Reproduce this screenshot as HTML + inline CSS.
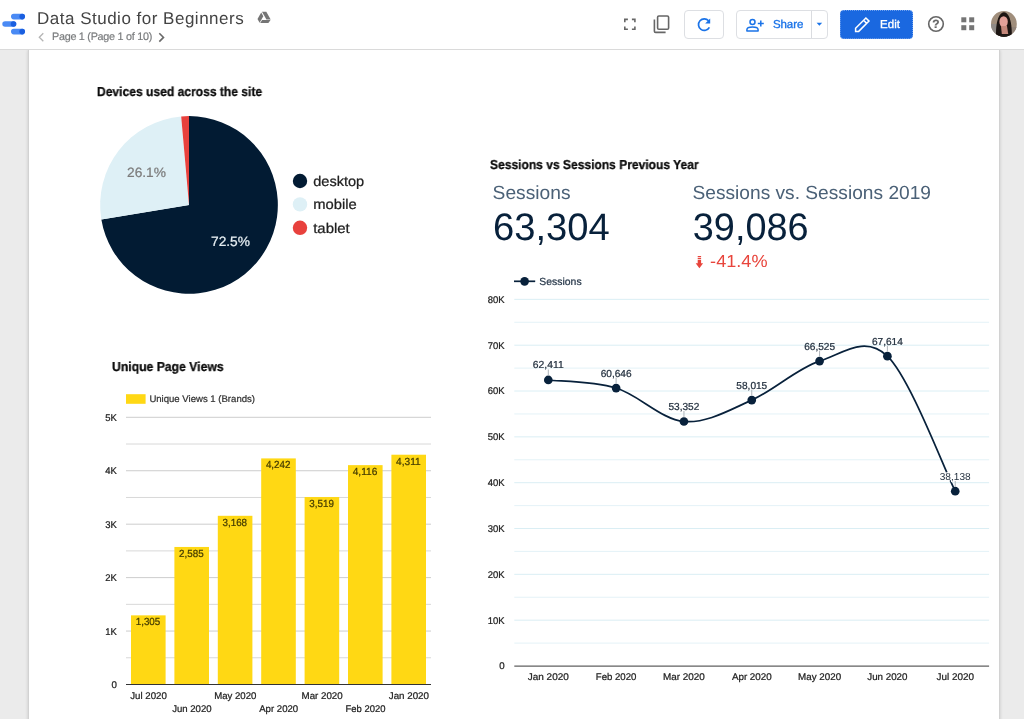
<!DOCTYPE html>
<html lang="en">
<head>
<meta charset="utf-8">
<title>Data Studio for Beginners</title>
<style>
html,body{margin:0;padding:0}
body{text-rendering:geometricPrecision;width:1024px;height:719px;overflow:hidden;background:#ebebeb;font-family:"Liberation Sans",Arial,sans-serif;position:relative}
#hdr{z-index:2;position:absolute;left:0;top:0;width:1024px;height:49px;background:#fff;border-bottom:1px solid #dadada}
#hdr .title{position:absolute;left:36.6px;top:8.6px;font-size:17px;line-height:20px;color:#444;white-space:nowrap;letter-spacing:0.5px}
#hdr .sub{position:absolute;left:51.5px;top:30.1px;font-size:10.8px;line-height:14px;color:#7a7c7e;-webkit-text-stroke:0.2px #7a7c7e;white-space:nowrap;letter-spacing:-0.27px}
.btn{position:absolute;top:10px;height:27px;border:1px solid #dddfe3;border-radius:4px;background:#fff;box-sizing:content-box}
.btn.primary{background:#1a68e0;border:1px dotted #6fa0ee;color:#fff}
.lbl{position:absolute;font-size:12px;font-weight:bold;line-height:16px;white-space:nowrap}
#page{position:absolute;left:28px;top:50px;width:970px;height:680px;background:#fff;border-left:1px solid #d2d2d2;border-right:1px solid #d2d2d2;box-shadow:0 0 3px rgba(0,0,0,.16)}
svg{position:absolute;left:0;top:0;overflow:visible;will-change:transform}
#hdr .title,#hdr .sub,.lbl,.h{will-change:transform}
svg text{text-rendering:geometricPrecision;font-family:"Liberation Sans",Arial,sans-serif}
.h{margin:0;position:absolute;font-weight:bold;color:#0c0c0c;-webkit-text-stroke:0.3px #0c0c0c;white-space:nowrap;font-size:13px;line-height:14px;transform-origin:0 0}
</style>
</head>
<body>

<div id="hdr">
<div class="title">Data Studio for Beginners</div>
<div class="sub">Page 1 (Page 1 of 10)</div>
<div class="btn" style="left:684px;width:38px"></div>
<div class="btn" style="left:736px;width:90px"><div style="position:absolute;left:74.3px;top:0;width:1px;height:27px;background:#dadce0"></div><span class="lbl" style="left:36.3px;top:6.3px;color:#1a73e8;font-size:11.5px;font-weight:normal;-webkit-text-stroke:0.35px #1a73e8;letter-spacing:-0.1px">Share</span></div>
<div class="btn primary" style="left:840px;width:71.3px"><span class="lbl" style="left:38.5px;top:6.3px;color:#fff;font-size:11.5px;font-weight:normal;-webkit-text-stroke:0.35px #fff;letter-spacing:0.05px">Edit</span></div>
<svg width="1024" height="50" viewBox="0 0 1024 50">
<g>
<rect x="11" y="13.8" width="14" height="5.6" rx="2.8" fill="#4a8af4"/>
<circle cx="22.2" cy="16.6" r="2.8" fill="#1a5fe0"/>
<rect x="2.3" y="21.2" width="14" height="5.6" rx="2.8" fill="#4a8af4"/>
<circle cx="13.5" cy="24.0" r="2.8" fill="#1a5fe0"/>
<rect x="11" y="28.8" width="14" height="5.6" rx="2.8" fill="#4a8af4"/>
<circle cx="22.2" cy="31.6" r="2.8" fill="#1a5fe0"/>
</g>
<path d="M43.3 33.2 L39.3 37.2 L43.3 41.2" fill="none" stroke="#b4b4b4" stroke-width="1.3"/>
<path d="M159.3 33.2 L163.5 37.4 L159.3 41.6" fill="none" stroke="#6a6a6a" stroke-width="1.6"/>
<g fill="#757575"><path d="M262.0 11.8 L266.3 11.8 L270.7 19.4 L266.4 19.4 Z"/><path d="M261.2 12.6 L263.3 16.3 L259.6 22.8 L257.5 19.1 Z"/><path d="M262.1 19.9 L270.5 19.9 L268.4 23.0 L260.2 23.0 Z"/></g>
<path d="M624.8 22.3 V19.4 H627.9 M631.9 19.4 H634.9 V22.3 M634.9 26.4 V29.3 H631.9 M627.9 29.3 H624.8 V26.4" fill="none" stroke="#666" stroke-width="1.6"/>
<rect x="657.6" y="16" width="11" height="13.2" rx="1.3" fill="none" stroke="#666" stroke-width="1.6"/>
<path d="M654.4 19.6 V31.2 A1.2 1.2 0 0 0 655.6 32.4 H665.6" fill="none" stroke="#666" stroke-width="1.6"/>
<path d="M708.6 20.7 A5.8 5.8 0 1 0 709.4 27.4" fill="none" stroke="#1a73e8" stroke-width="1.7"/>
<path d="M710.2 18.6 V23.6 H705.2 Z" fill="#1a73e8"/>
<circle cx="752.5" cy="22" r="2.5" fill="none" stroke="#1a73e8" stroke-width="1.5"/>
<path d="M746.9 31 V29.7 C746.9 27.8 750.2 27 752.5 27 C754.8 27 758.1 27.8 758.1 29.7 V31 Z" fill="none" stroke="#1a73e8" stroke-width="1.5" stroke-linejoin="round"/>
<path d="M760.8 20.6 V26.6 M757.8 23.6 H763.8" stroke="#1a73e8" stroke-width="1.5" fill="none"/>
<path d="M816.6 22.7 H822.2 L819.4 25.8 Z" fill="#1a73e8"/>
<path d="M855.6 31.4 V28.3 L865.9 18 L869 21.1 L858.7 31.4 Z M863.6 20.3 L866.7 23.4" fill="none" stroke="#fff" stroke-width="1.5" stroke-linejoin="miter"/>
<circle cx="936" cy="24" r="7.3" fill="none" stroke="#666" stroke-width="1.6"/>
<text x="936" y="28.3" font-size="12" fill="#666" text-anchor="middle" font-weight="bold" stroke="#666" stroke-width="0.24">?</text>
<rect x="961.3" y="17.3" width="5" height="5" fill="#757575"/>
<rect x="961.3" y="25.2" width="5" height="5" fill="#757575"/>
<rect x="969.2" y="17.3" width="5" height="5" fill="#757575"/>
<rect x="969.2" y="25.2" width="5" height="5" fill="#757575"/>
<defs><clipPath id="av"><circle cx="1003.9" cy="23.9" r="12.9"/></clipPath></defs>
<g clip-path="url(#av)"><rect x="990" y="10" width="28" height="28" fill="#a08e7c"/><rect x="990" y="24" width="9" height="14" fill="#8f8a86"/><rect x="1010" y="27" width="9" height="11" fill="#93857a"/><path d="M996.2 37 C995.5 30 996.5 13 1004 12.2 C1011.5 13 1012 30 1011.8 37 Z" fill="#1c1512"/><ellipse cx="1003.6" cy="21.8" rx="4.2" ry="5.6" fill="#e3a199"/><path d="M1001 26 H1007 L1008.2 34 H1001.8 Z" fill="#c4877a"/><path d="M995 38 C997 33.5 1011 33.5 1013 38 Z" fill="#231b18"/></g>
</svg>
</div>
<div id="page">
<svg width="1024" height="719" viewBox="0 0 1024 719" style="left:-29px;top:-50px">
<path d="M189.0 204.95 L189.00 116.10 A88.85 88.85 0 1 1 101.35 219.51 Z" fill="#021b33"/>
<path d="M189.0 204.95 L101.35 219.51 A88.85 88.85 0 0 1 181.19 116.44 Z" fill="#def0f6"/>
<path d="M189.0 204.95 L181.19 116.44 A88.85 88.85 0 0 1 189.00 116.10 Z" fill="#e8413d"/>
<text x="127" y="177.3" font-size="13.5" fill="#7c7c7c" text-anchor="start" font-weight="normal" textLength="39" lengthAdjust="spacingAndGlyphs" stroke="#7c7c7c" stroke-width="0.24">26.1%</text>
<text x="211" y="246.3" font-size="13.5" fill="#e6eef2" text-anchor="start" font-weight="normal" textLength="39" lengthAdjust="spacingAndGlyphs" stroke="#e6eef2" stroke-width="0.24">72.5%</text>
<circle cx="300" cy="181.0" r="7.2" fill="#021b33"/>
<text x="313.2" y="185.8" font-size="14" fill="#212121" text-anchor="start" font-weight="normal" textLength="51" lengthAdjust="spacingAndGlyphs" stroke="#212121" stroke-width="0.24">desktop</text>
<circle cx="300" cy="204.4" r="7.2" fill="#def0f6"/>
<text x="313.2" y="209.2" font-size="14" fill="#212121" text-anchor="start" font-weight="normal" textLength="43.5" lengthAdjust="spacingAndGlyphs" stroke="#212121" stroke-width="0.24">mobile</text>
<circle cx="300" cy="227.8" r="7.2" fill="#e8413d"/>
<text x="313.2" y="232.6" font-size="14" fill="#212121" text-anchor="start" font-weight="normal" textLength="36.5" lengthAdjust="spacingAndGlyphs" stroke="#212121" stroke-width="0.24">tablet</text>
<text x="492.6" y="198.5" font-size="19" fill="#4b6177" text-anchor="start" font-weight="normal" textLength="78" lengthAdjust="spacingAndGlyphs">Sessions</text>
<text x="493.0" y="239.8" font-size="38.3" fill="#08213b" text-anchor="start" font-weight="normal" textLength="116.8" lengthAdjust="spacingAndGlyphs">63,304</text>
<text x="692.5" y="198.5" font-size="19" fill="#4b6177" text-anchor="start" font-weight="normal" textLength="238.5" lengthAdjust="spacingAndGlyphs">Sessions vs. Sessions 2019</text>
<text x="692.8" y="239.8" font-size="38.3" fill="#08213b" text-anchor="start" font-weight="normal" textLength="115.8" lengthAdjust="spacingAndGlyphs">39,086</text>
<path d="M697.7 256.1 H701.1 V257.3 H697.7 Z M697.7 258 H701.1 V259.2 H697.7 Z M697.7 259.9 H701.1 V263.3 H703.1 L699.4 268.2 L695.7 263.3 H697.7 Z" fill="#e8453c"/>
<text x="710.1" y="267.4" font-size="17.6" fill="#e8453c" text-anchor="start" font-weight="normal" textLength="57.4" lengthAdjust="spacingAndGlyphs">-41.4%</text>
<line x1="514.3" x2="989.1" y1="643.09" y2="643.09" stroke="#e1f1f6" stroke-width="0.9"/>
<line x1="514.3" x2="989.1" y1="620.17" y2="620.17" stroke="#d6ecf3" stroke-width="0.9"/>
<line x1="514.3" x2="989.1" y1="597.25" y2="597.25" stroke="#e1f1f6" stroke-width="0.9"/>
<line x1="514.3" x2="989.1" y1="574.34" y2="574.34" stroke="#d6ecf3" stroke-width="0.9"/>
<line x1="514.3" x2="989.1" y1="551.42" y2="551.42" stroke="#e1f1f6" stroke-width="0.9"/>
<line x1="514.3" x2="989.1" y1="528.51" y2="528.51" stroke="#d6ecf3" stroke-width="0.9"/>
<line x1="514.3" x2="989.1" y1="505.60" y2="505.60" stroke="#e1f1f6" stroke-width="0.9"/>
<line x1="514.3" x2="989.1" y1="482.68" y2="482.68" stroke="#d6ecf3" stroke-width="0.9"/>
<line x1="514.3" x2="989.1" y1="459.76" y2="459.76" stroke="#e1f1f6" stroke-width="0.9"/>
<line x1="514.3" x2="989.1" y1="436.85" y2="436.85" stroke="#d6ecf3" stroke-width="0.9"/>
<line x1="514.3" x2="989.1" y1="413.94" y2="413.94" stroke="#e1f1f6" stroke-width="0.9"/>
<line x1="514.3" x2="989.1" y1="391.02" y2="391.02" stroke="#d6ecf3" stroke-width="0.9"/>
<line x1="514.3" x2="989.1" y1="368.11" y2="368.11" stroke="#e1f1f6" stroke-width="0.9"/>
<line x1="514.3" x2="989.1" y1="345.19" y2="345.19" stroke="#d6ecf3" stroke-width="0.9"/>
<line x1="514.3" x2="989.1" y1="322.28" y2="322.28" stroke="#e1f1f6" stroke-width="0.9"/>
<line x1="514.3" x2="989.1" y1="299.36" y2="299.36" stroke="#d6ecf3" stroke-width="0.9"/>
<line x1="514.3" x2="989.1" y1="666.2" y2="666.2" stroke="#606060" stroke-width="1.3"/>
<text x="504.6" y="669.4" font-size="9.7" fill="#222" text-anchor="end" font-weight="normal" stroke="#222" stroke-width="0.24">0</text>
<text x="504.6" y="623.6" font-size="9.7" fill="#222" text-anchor="end" font-weight="normal" textLength="16.9" lengthAdjust="spacingAndGlyphs" stroke="#222" stroke-width="0.24">10K</text>
<text x="504.6" y="577.7" font-size="9.7" fill="#222" text-anchor="end" font-weight="normal" textLength="16.9" lengthAdjust="spacingAndGlyphs" stroke="#222" stroke-width="0.24">20K</text>
<text x="504.6" y="531.9" font-size="9.7" fill="#222" text-anchor="end" font-weight="normal" textLength="16.9" lengthAdjust="spacingAndGlyphs" stroke="#222" stroke-width="0.24">30K</text>
<text x="504.6" y="486.1" font-size="9.7" fill="#222" text-anchor="end" font-weight="normal" textLength="16.9" lengthAdjust="spacingAndGlyphs" stroke="#222" stroke-width="0.24">40K</text>
<text x="504.6" y="440.2" font-size="9.7" fill="#222" text-anchor="end" font-weight="normal" textLength="16.9" lengthAdjust="spacingAndGlyphs" stroke="#222" stroke-width="0.24">50K</text>
<text x="504.6" y="394.4" font-size="9.7" fill="#222" text-anchor="end" font-weight="normal" textLength="16.9" lengthAdjust="spacingAndGlyphs" stroke="#222" stroke-width="0.24">60K</text>
<text x="504.6" y="348.6" font-size="9.7" fill="#222" text-anchor="end" font-weight="normal" textLength="16.9" lengthAdjust="spacingAndGlyphs" stroke="#222" stroke-width="0.24">70K</text>
<text x="504.6" y="302.8" font-size="9.7" fill="#222" text-anchor="end" font-weight="normal" textLength="16.9" lengthAdjust="spacingAndGlyphs" stroke="#222" stroke-width="0.24">80K</text>
<path d="M548.30 379.97 C559.60 381.32 593.51 381.14 616.12 388.06 C638.73 394.98 661.33 419.48 683.94 421.49 C706.55 423.50 729.15 410.18 751.76 400.12 C774.37 390.06 796.97 368.45 819.58 361.12 C842.19 353.78 864.79 334.44 887.40 356.13 C910.01 377.81 943.92 468.70 955.22 491.21" fill="none" stroke="#08213b" stroke-width="1.7"/>
<circle cx="548.30" cy="379.97" r="4.35" fill="#08213b"/>
<circle cx="616.12" cy="388.06" r="4.35" fill="#08213b"/>
<circle cx="683.94" cy="421.49" r="4.35" fill="#08213b"/>
<circle cx="751.76" cy="400.12" r="4.35" fill="#08213b"/>
<circle cx="819.58" cy="361.12" r="4.35" fill="#08213b"/>
<circle cx="887.40" cy="356.13" r="4.35" fill="#08213b"/>
<circle cx="955.22" cy="491.21" r="4.35" fill="#08213b"/>
<line x1="548.30" x2="548.30" y1="369.47" y2="375.47" stroke="#aeb4ba" stroke-width="1"/>
<text x="548.3" y="368.4" font-size="10.1" fill="#1f2c3b" text-anchor="middle" font-weight="normal" textLength="30.9" lengthAdjust="spacingAndGlyphs" stroke="#1f2c3b" stroke-width="0.24">62,411</text>
<text x="548.3" y="680.4" font-size="9.7" fill="#222" text-anchor="middle" font-weight="normal" textLength="41.0" lengthAdjust="spacingAndGlyphs" stroke="#222" stroke-width="0.24">Jan 2020</text>
<line x1="616.12" x2="616.12" y1="377.56" y2="383.56" stroke="#aeb4ba" stroke-width="1"/>
<text x="616.1" y="376.5" font-size="10.1" fill="#1f2c3b" text-anchor="middle" font-weight="normal" textLength="30.9" lengthAdjust="spacingAndGlyphs" stroke="#1f2c3b" stroke-width="0.24">60,646</text>
<text x="616.1" y="680.4" font-size="9.7" fill="#222" text-anchor="middle" font-weight="normal" textLength="40.6" lengthAdjust="spacingAndGlyphs" stroke="#222" stroke-width="0.24">Feb 2020</text>
<line x1="683.94" x2="683.94" y1="410.99" y2="416.99" stroke="#aeb4ba" stroke-width="1"/>
<text x="683.9" y="409.9" font-size="10.1" fill="#1f2c3b" text-anchor="middle" font-weight="normal" textLength="30.9" lengthAdjust="spacingAndGlyphs" stroke="#1f2c3b" stroke-width="0.24">53,352</text>
<text x="683.9" y="680.4" font-size="9.7" fill="#222" text-anchor="middle" font-weight="normal" textLength="41.8" lengthAdjust="spacingAndGlyphs" stroke="#222" stroke-width="0.24">Mar 2020</text>
<line x1="751.76" x2="751.76" y1="389.62" y2="395.62" stroke="#aeb4ba" stroke-width="1"/>
<text x="751.8" y="388.5" font-size="10.1" fill="#1f2c3b" text-anchor="middle" font-weight="normal" textLength="30.9" lengthAdjust="spacingAndGlyphs" stroke="#1f2c3b" stroke-width="0.24">58,015</text>
<text x="751.8" y="680.4" font-size="9.7" fill="#222" text-anchor="middle" font-weight="normal" textLength="39.8" lengthAdjust="spacingAndGlyphs" stroke="#222" stroke-width="0.24">Apr 2020</text>
<line x1="819.58" x2="819.58" y1="350.62" y2="356.62" stroke="#aeb4ba" stroke-width="1"/>
<text x="819.6" y="349.5" font-size="10.1" fill="#1f2c3b" text-anchor="middle" font-weight="normal" textLength="30.9" lengthAdjust="spacingAndGlyphs" stroke="#1f2c3b" stroke-width="0.24">66,525</text>
<text x="819.6" y="680.4" font-size="9.7" fill="#222" text-anchor="middle" font-weight="normal" textLength="43.0" lengthAdjust="spacingAndGlyphs" stroke="#222" stroke-width="0.24">May 2020</text>
<line x1="887.40" x2="887.40" y1="345.63" y2="351.63" stroke="#aeb4ba" stroke-width="1"/>
<text x="887.4" y="344.5" font-size="10.1" fill="#1f2c3b" text-anchor="middle" font-weight="normal" textLength="30.9" lengthAdjust="spacingAndGlyphs" stroke="#1f2c3b" stroke-width="0.24">67,614</text>
<text x="887.4" y="680.4" font-size="9.7" fill="#222" text-anchor="middle" font-weight="normal" textLength="40.2" lengthAdjust="spacingAndGlyphs" stroke="#222" stroke-width="0.24">Jun 2020</text>
<line x1="955.22" x2="955.22" y1="480.71" y2="486.71" stroke="#aeb4ba" stroke-width="1"/>
<text x="955.2" y="479.6" font-size="10.1" fill="#1f2c3b" text-anchor="middle" font-weight="normal" textLength="30.9" lengthAdjust="spacingAndGlyphs" stroke="#fff" stroke-width="2" paint-order="stroke" stroke-linejoin="round">38,138</text>
<text x="955.2" y="680.4" font-size="9.7" fill="#222" text-anchor="middle" font-weight="normal" textLength="37.4" lengthAdjust="spacingAndGlyphs" stroke="#222" stroke-width="0.24">Jul 2020</text>
<line x1="514" x2="535.2" y1="281.3" y2="281.3" stroke="#08213b" stroke-width="1.7"/><circle cx="524.6" cy="281.3" r="4.35" fill="#08213b"/>
<text x="539.3" y="285.2" font-size="10.3" fill="#2a3a4c" text-anchor="start" font-weight="normal" textLength="42.3" lengthAdjust="spacingAndGlyphs" stroke="#2a3a4c" stroke-width="0.24">Sessions</text>
<line x1="126" x2="431" y1="657.78" y2="657.78" stroke="#d8d8d8" stroke-width="1"/>
<line x1="126" x2="431" y1="631.06" y2="631.06" stroke="#cdcdcd" stroke-width="1"/>
<line x1="126" x2="431" y1="604.34" y2="604.34" stroke="#d8d8d8" stroke-width="1"/>
<line x1="126" x2="431" y1="577.62" y2="577.62" stroke="#cdcdcd" stroke-width="1"/>
<line x1="126" x2="431" y1="550.90" y2="550.90" stroke="#d8d8d8" stroke-width="1"/>
<line x1="126" x2="431" y1="524.18" y2="524.18" stroke="#cdcdcd" stroke-width="1"/>
<line x1="126" x2="431" y1="497.46" y2="497.46" stroke="#d8d8d8" stroke-width="1"/>
<line x1="126" x2="431" y1="470.74" y2="470.74" stroke="#cdcdcd" stroke-width="1"/>
<line x1="126" x2="431" y1="444.02" y2="444.02" stroke="#d8d8d8" stroke-width="1"/>
<line x1="126" x2="431" y1="417.30" y2="417.30" stroke="#cdcdcd" stroke-width="1"/>
<text x="116.8" y="687.9" font-size="9.7" fill="#222" text-anchor="end" font-weight="normal" stroke="#222" stroke-width="0.24">0</text>
<text x="116.8" y="634.5" font-size="9.7" fill="#222" text-anchor="end" font-weight="normal" textLength="11.6" lengthAdjust="spacingAndGlyphs" stroke="#222" stroke-width="0.24">1K</text>
<text x="116.8" y="581.0" font-size="9.7" fill="#222" text-anchor="end" font-weight="normal" textLength="11.6" lengthAdjust="spacingAndGlyphs" stroke="#222" stroke-width="0.24">2K</text>
<text x="116.8" y="527.6" font-size="9.7" fill="#222" text-anchor="end" font-weight="normal" textLength="11.6" lengthAdjust="spacingAndGlyphs" stroke="#222" stroke-width="0.24">3K</text>
<text x="116.8" y="474.1" font-size="9.7" fill="#222" text-anchor="end" font-weight="normal" textLength="11.6" lengthAdjust="spacingAndGlyphs" stroke="#222" stroke-width="0.24">4K</text>
<text x="116.8" y="420.7" font-size="9.7" fill="#222" text-anchor="end" font-weight="normal" textLength="11.6" lengthAdjust="spacingAndGlyphs" stroke="#222" stroke-width="0.24">5K</text>
<rect x="131.00" y="615.36" width="34.6" height="68.64" fill="#ffd814"/>
<text x="148.0" y="625.2" font-size="10.3" fill="#453c00" text-anchor="middle" font-weight="normal" textLength="24.6" lengthAdjust="spacingAndGlyphs" stroke="#453c00" stroke-width="0.24">1,305</text>
<text x="148.5" y="698.9" font-size="9.7" fill="#222" text-anchor="middle" font-weight="normal" textLength="36.6" lengthAdjust="spacingAndGlyphs" stroke="#222" stroke-width="0.24">Jul 2020</text>
<rect x="174.40" y="546.96" width="34.6" height="137.04" fill="#ffd814"/>
<text x="191.4" y="556.8" font-size="10.3" fill="#453c00" text-anchor="middle" font-weight="normal" textLength="24.6" lengthAdjust="spacingAndGlyphs" stroke="#453c00" stroke-width="0.24">2,585</text>
<text x="191.9" y="712.2" font-size="9.7" fill="#222" text-anchor="middle" font-weight="normal" textLength="39.400000000000006" lengthAdjust="spacingAndGlyphs" stroke="#222" stroke-width="0.24">Jun 2020</text>
<rect x="217.80" y="515.80" width="34.6" height="168.20" fill="#ffd814"/>
<text x="234.8" y="525.6" font-size="10.3" fill="#453c00" text-anchor="middle" font-weight="normal" textLength="24.6" lengthAdjust="spacingAndGlyphs" stroke="#453c00" stroke-width="0.24">3,168</text>
<text x="235.3" y="698.9" font-size="9.7" fill="#222" text-anchor="middle" font-weight="normal" textLength="42.2" lengthAdjust="spacingAndGlyphs" stroke="#222" stroke-width="0.24">May 2020</text>
<rect x="261.20" y="458.41" width="34.6" height="225.59" fill="#ffd814"/>
<text x="278.2" y="468.2" font-size="10.3" fill="#453c00" text-anchor="middle" font-weight="normal" textLength="24.6" lengthAdjust="spacingAndGlyphs" stroke="#453c00" stroke-width="0.24">4,242</text>
<text x="278.7" y="712.2" font-size="9.7" fill="#222" text-anchor="middle" font-weight="normal" textLength="39.0" lengthAdjust="spacingAndGlyphs" stroke="#222" stroke-width="0.24">Apr 2020</text>
<rect x="304.60" y="497.04" width="34.6" height="186.96" fill="#ffd814"/>
<text x="321.6" y="506.8" font-size="10.3" fill="#453c00" text-anchor="middle" font-weight="normal" textLength="24.6" lengthAdjust="spacingAndGlyphs" stroke="#453c00" stroke-width="0.24">3,519</text>
<text x="322.1" y="698.9" font-size="9.7" fill="#222" text-anchor="middle" font-weight="normal" textLength="41.0" lengthAdjust="spacingAndGlyphs" stroke="#222" stroke-width="0.24">Mar 2020</text>
<rect x="348.00" y="465.14" width="34.6" height="218.86" fill="#ffd814"/>
<text x="365.0" y="474.9" font-size="10.3" fill="#453c00" text-anchor="middle" font-weight="normal" textLength="24.6" lengthAdjust="spacingAndGlyphs" stroke="#453c00" stroke-width="0.24">4,116</text>
<text x="365.5" y="712.2" font-size="9.7" fill="#222" text-anchor="middle" font-weight="normal" textLength="39.800000000000004" lengthAdjust="spacingAndGlyphs" stroke="#222" stroke-width="0.24">Feb 2020</text>
<rect x="391.40" y="454.72" width="34.6" height="229.28" fill="#ffd814"/>
<text x="408.4" y="464.5" font-size="10.3" fill="#453c00" text-anchor="middle" font-weight="normal" textLength="24.6" lengthAdjust="spacingAndGlyphs" stroke="#453c00" stroke-width="0.24">4,311</text>
<text x="408.9" y="698.9" font-size="9.7" fill="#222" text-anchor="middle" font-weight="normal" textLength="40.2" lengthAdjust="spacingAndGlyphs" stroke="#222" stroke-width="0.24">Jan 2020</text>
<line x1="126" x2="431" y1="684.5" y2="684.5" stroke="#333" stroke-width="1"/>
<rect x="126" y="394.2" width="19.6" height="9.6" fill="#ffd814"/>
<text x="149.4" y="402.3" font-size="9.6" fill="#333" text-anchor="start" font-weight="normal" textLength="105.6" lengthAdjust="spacingAndGlyphs" stroke="#333" stroke-width="0.24">Unique Views 1 (Brands)</text>
</svg>
<h3 class="h" style="left:68.4px;top:34.8px;transform:scaleX(.929)">Devices used across the site</h3>
<h3 class="h" style="left:460.5px;top:107.7px;transform:scaleX(.926)">Sessions vs Sessions Previous Year</h3>
<h3 class="h" style="left:82.9px;top:310.3px;transform:scaleX(.938)">Unique Page Views</h3>
</div>
</body></html>
